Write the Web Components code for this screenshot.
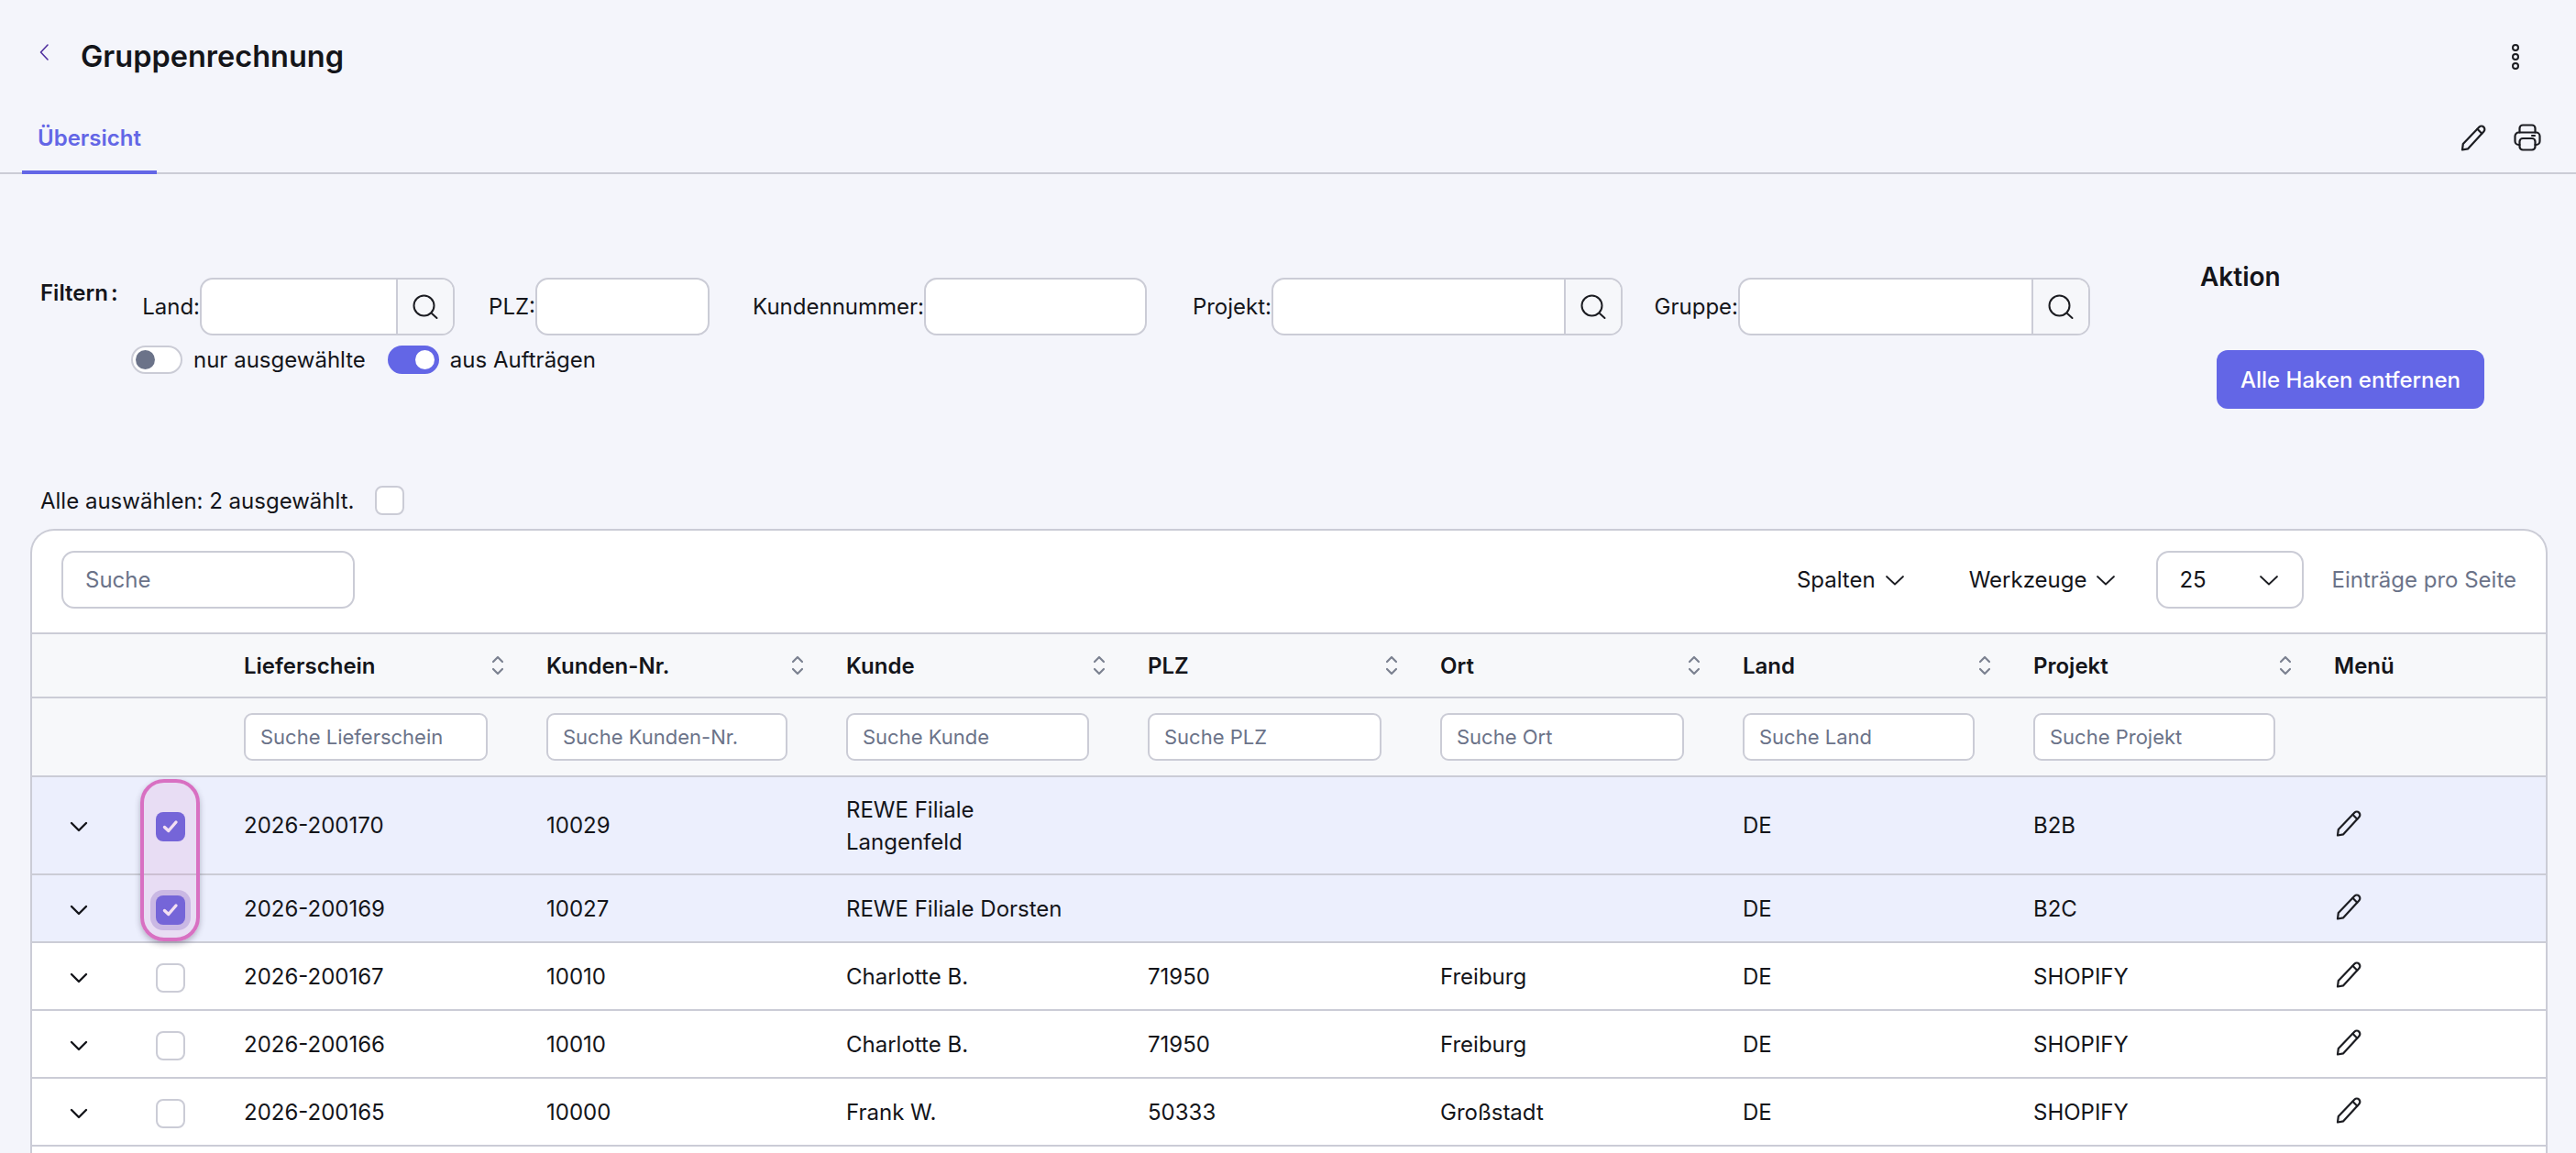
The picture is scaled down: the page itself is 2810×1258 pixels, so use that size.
<!DOCTYPE html>
<html lang="de">
<head>
<meta charset="utf-8">
<title>Gruppenrechnung</title>
<style>
  html, body {
    margin: 0;
    height: 1258px;
    overflow: hidden;
    background: #f4f5fb;
    color: #14151a;
    font-family: Inter, "Noto Sans", sans-serif;
    font-size: 24px;
  }
  body { display: flex; flex-direction: column; }
</style>
</head>
<body>
  <page-header heading="Gruppenrechnung"></page-header>
  <tab-bar tab="Übersicht">
    <app-icon slot="actions" name="pencil"></app-icon>
    <app-icon slot="actions" name="printer"></app-icon>
  </tab-bar>
  <filter-panel>
    <filter-field slot="fields" label="Land:" search style="width:341px;margin-right:37px" input-width="278"></filter-field>
    <filter-field slot="fields" label="PLZ:" style="width:241px;margin-right:50px" input-width="190"></filter-field>
    <filter-field slot="fields" label="Kundennummer:" style="width:427px;margin-right:49px" input-width="243"></filter-field>
    <filter-field slot="fields" label="Projekt:" search style="width:470px;margin-right:36px" input-width="383"></filter-field>
    <filter-field slot="fields" label="Gruppe:" search style="width:474px" input-width="384"></filter-field>
    <toggle-switch slot="toggles">nur ausgewählte</toggle-switch>
    <toggle-switch slot="toggles" on>aus Aufträgen</toggle-switch>
    <span slot="action-title">Aktion</span>
    <span slot="action-button">Alle Haken entfernen</span>
  </filter-panel>
  <select-all>Alle auswählen: 2 ausgewählt.</select-all>
  <data-table></data-table>

<script>
const ICONS = {
  back: '<svg width="12" height="20" viewBox="0 0 12 20" fill="none" stroke="#4f2f9f" stroke-width="1.6" stroke-linecap="round" stroke-linejoin="round"><path d="M10 2 2.500 10 10 18"/></svg>',
  dots: '<svg width="12" height="30" viewBox="0 0 12 30" fill="none" stroke="#1c1d22" stroke-width="2"><circle cx="6" cy="5" r="3"/><circle cx="6" cy="15" r="3"/><circle cx="6" cy="25" r="3"/></svg>',
  pencil: '<svg width="30" height="30" viewBox="0 0 30 30" fill="none" stroke="#1c1d22" stroke-width="2.200" stroke-linejoin="round" stroke-linecap="round"><path d="M2 28.500 2.800 22 20.500 3.600a3.400 3.400 0 0 1 4.800 0 3.400 3.400 0 0 1 .1 4.800L8.200 27.300Z"/><path d="M18.400 5.800 23.300 10.700"/></svg>',
  printer: '<svg width="30" height="30" viewBox="0 0 30 30" fill="none" stroke="#1c1d22" stroke-width="2.200" stroke-linecap="round" stroke-linejoin="round"><path d="M6.500 9.500V5a3.500 3.500 0 0 1 3.500-3.500h10A3.500 3.500 0 0 1 23.500 5v4.500"/><path d="M6.500 23H5.500a4 4 0 0 1-4-4v-5.500a4 4 0 0 1 4-4h19a4 4 0 0 1 4 4V19a4 4 0 0 1-4 4h-1"/><rect x="6.500" y="16" width="17" height="12.500" rx="3.500"/><path d="M20 13h3"/></svg>',
  search: '<svg width="30" height="30" viewBox="0 0 30 30" fill="none" stroke="#1c1d22" stroke-width="2" stroke-linecap="round"><circle cx="13.500" cy="13.500" r="11"/><path d="M22 22 27.500 27"/></svg>',
  sort: '<svg width="14" height="24" viewBox="0 0 14 24" fill="none" stroke="#7b8190" stroke-width="2.200" stroke-linecap="round" stroke-linejoin="round"><path d="M2 8 7 3 12 8"/><path d="M2 16 7 21 12 16"/></svg>',
  chevron: '<svg width="22" height="12" viewBox="0 0 22 12" fill="none" stroke="#1c1d22" stroke-width="1.800" stroke-linecap="round" stroke-linejoin="round"><path d="M2 2 11 10.500 20 2"/></svg>',
  rowchevron: '<svg width="22" height="14" viewBox="0 0 22 14" fill="none" stroke="#14151a" stroke-width="2.400" stroke-linecap="round" stroke-linejoin="round"><path d="M3 3 11 11 19 3"/></svg>',
  check: '<svg width="18" height="16" viewBox="0 0 18 16" fill="none" stroke="#f8f2fb" stroke-width="3.400" stroke-linecap="round" stroke-linejoin="round"><path d="M2.500 8.500 6.800 12.500 15 3"/></svg>'
};

class AppIcon extends HTMLElement {
  connectedCallback() {
    if (this.shadowRoot) return;
    this.attachShadow({ mode: 'open' });
    this.shadowRoot.innerHTML = `<style>:host{display:inline-flex;align-items:center;justify-content:center;line-height:0}</style>${ICONS[this.getAttribute('name')] || ''}`;
  }
}

class PageHeader extends HTMLElement {
  connectedCallback() {
    this.attachShadow({ mode: 'open' });
    this.shadowRoot.innerHTML = `
      <style>
        :host { display: flex; align-items: center; flex: none; height: 112px; padding: 12px 60px 0 42px; box-sizing: border-box; }
        .back { width: 46px; margin-top: -8px; }
        h1 { flex: 1; margin: 0; font-size: 32.500px; font-weight: 600; line-height: 44px; }
      </style>
      <div class="back"><app-icon name="back"></app-icon></div>
      <h1>${this.getAttribute('heading')}</h1>
      <app-icon name="dots"></app-icon>`;
  }
}

class TabBar extends HTMLElement {
  connectedCallback() {
    this.attachShadow({ mode: 'open' });
    this.shadowRoot.innerHTML = `
      <style>
        :host { display: flex; flex: none; align-items: flex-end; height: 76px; border-bottom: 2px solid #cbccd6; padding: 0 38px 0 24px; }
        .tab { height: 78px; box-sizing: border-box; padding: 2px 17px 0; display: flex; align-items: center; margin-bottom: -2px; border-bottom: 4px solid #6366e6; color: #6366e6; font-weight: 600; }
        .actions { margin-left: auto; display: flex; gap: 28px; align-self: center; }
      </style>
      <div class="tab">${this.getAttribute('tab')}</div>
      <div class="actions"><slot name="actions"></slot></div>`;
  }
}

class FilterField extends HTMLElement {
  connectedCallback() {
    this.attachShadow({ mode: 'open' });
    const search = this.hasAttribute('search');
    this.shadowRoot.innerHTML = `
      <style>
        :host { display: flex; align-items: center; justify-content: flex-end; flex: none; height: 63px; }
        label { white-space: nowrap; }
        .box { display: flex; height: 63px; width: ${this.getAttribute('input-width')}px; box-sizing: border-box; border: 2px solid #cbccd6; border-radius: 14px; overflow: hidden; background: #fff; flex: none; }
        input { flex: 1; min-width: 0; border: 0; outline: 0; background: transparent; font: inherit; padding: 0 24px; }
        .btn { width: 60px; flex: none; background: #f6f7fa; border-left: 2px solid #cbccd6; display: flex; align-items: center; justify-content: center; }
      </style>
      <label>${this.getAttribute('label')}</label>
      <div class="box"><input type="text">${search ? '<div class="btn"><app-icon name="search"></app-icon></div>' : ''}</div>`;
  }
}

class ToggleSwitch extends HTMLElement {
  connectedCallback() {
    this.attachShadow({ mode: 'open' });
    const on = this.hasAttribute('on');
    this.shadowRoot.innerHTML = `
      <style>
        :host { display: inline-flex; align-items: center; gap: 12px; height: 31px; }
        .track { width: 56px; height: 31px; box-sizing: border-box; border-radius: 16px; display: flex; align-items: center; padding: 0 3px; justify-content: ${on ? 'flex-end' : 'flex-start'}; background: ${on ? '#6366e6' : '#fff'}; border: 2px solid ${on ? '#6366e6' : '#cbccd6'}; }
        .knob { width: 21px; height: 21px; border-radius: 50%; background: ${on ? '#fff' : '#6b7389'}; }
      </style>
      <span class="track"><span class="knob"></span></span>
      <span><slot></slot></span>`;
  }
}

class FilterPanel extends HTMLElement {
  connectedCallback() {
    this.attachShadow({ mode: 'open' });
    this.shadowRoot.innerHTML = `
      <style>
        :host { display: flex; flex: none; height: 340px; box-sizing: border-box; padding: 0 100px 0 44px; }
        .heading { width: 99px; flex: none; padding-top: 113px; font-weight: 600; line-height: 34px; white-space: nowrap; word-spacing: -3px; }
        .main { flex: 1; padding-top: 113px; }
        .fields { display: flex; margin-left: 12px; }
        .toggles { display: flex; gap: 24px; margin-top: 11px; }
        .action { width: 292px; flex: none; padding-top: 95px; }
        .title { margin-left: -18px; font-size: 28px; font-weight: 600; line-height: 34px; }
        .button { margin-top: 63px; height: 64px; border-radius: 12px; background: #6366e6; color: #fff; font-weight: 500; display: flex; align-items: center; justify-content: center; white-space: nowrap; }
      </style>
      <div class="heading">Filtern :</div>
      <div class="main">
        <div class="fields"><slot name="fields"></slot></div>
        <div class="toggles"><slot name="toggles"></slot></div>
      </div>
      <div class="action">
        <div class="title"><slot name="action-title"></slot></div>
        <div class="button"><slot name="action-button"></slot></div>
      </div>`;
  }
}

class CheckBox extends HTMLElement {
  connectedCallback() {
    this.attachShadow({ mode: 'open' });
    const checked = this.hasAttribute('checked');
    const focused = this.hasAttribute('focused');
    this.shadowRoot.innerHTML = `
      <style>
        :host { display: inline-flex; line-height: 0; }
        .box { width: 32px; height: 32px; box-sizing: border-box; border-radius: 8px; display: flex; align-items: center; justify-content: center;
          background: ${checked ? '#6663dc' : '#fff'}; border: ${checked ? '0' : '2px solid #cbccd6'};
          ${focused ? 'box-shadow: 0 0 0 6px #c9c4ea;' : ''} }
      </style>
      <span class="box">${checked ? ICONS.check : ''}</span>`;
  }
}

class SelectAll extends HTMLElement {
  connectedCallback() {
    this.attachShadow({ mode: 'open' });
    this.shadowRoot.innerHTML = `
      <style>
        :host { display: flex; flex: none; align-items: center; gap: 23px; height: 32px; padding-left: 44px; margin-bottom: 15px; }
      </style>
      <span><slot></slot></span>
      <check-box></check-box>`;
  }
}

const COLUMNS = [
  { label: 'Lieferschein', key: 'id', width: 330 },
  { label: 'Kunden-Nr.', key: 'nr', width: 327 },
  { label: 'Kunde', key: 'name', width: 329 },
  { label: 'PLZ', key: 'plz', width: 319 },
  { label: 'Ort', key: 'ort', width: 330 },
  { label: 'Land', key: 'land', width: 317 },
  { label: 'Projekt', key: 'projekt', width: 328 }
];

const ROWS = [
  { id: '2026-200170', nr: '10029', name: 'REWE Filiale<br>Langenfeld', plz: '', ort: '', land: 'DE', projekt: 'B2B', checked: true, height: 107 },
  { id: '2026-200169', nr: '10027', name: 'REWE Filiale Dorsten', plz: '', ort: '', land: 'DE', projekt: 'B2C', checked: true, focused: true },
  { id: '2026-200167', nr: '10010', name: 'Charlotte B.', plz: '71950', ort: 'Freiburg', land: 'DE', projekt: 'SHOPIFY' },
  { id: '2026-200166', nr: '10010', name: 'Charlotte B.', plz: '71950', ort: 'Freiburg', land: 'DE', projekt: 'SHOPIFY' },
  { id: '2026-200165', nr: '10000', name: 'Frank W.', plz: '50333', ort: 'Großstadt', land: 'DE', projekt: 'SHOPIFY' }
];

class DataTable extends HTMLElement {
  connectedCallback() {
    this.attachShadow({ mode: 'open' });
    const cols = COLUMNS.map(c => `<col style="width:${c.width}px">`).join('');
    const head = COLUMNS.map(c => `<th><div class="sort"><span>${c.label}</span><app-icon name="sort"></app-icon></div></th>`).join('');
    const filters = COLUMNS.map(c => `<td><input class="cell-input" placeholder="Suche ${c.label}"></td>`).join('');
    const rows = ROWS.map(r => `
      <tr class="${r.checked ? 'selected' : ''}" style="height:${r.height || 74}px">
        <td class="ctr"><app-icon name="rowchevron"></app-icon></td>
        <td class="ctr"><check-box ${r.checked ? 'checked' : ''} ${r.focused ? 'focused' : ''}></check-box></td>
        ${COLUMNS.map(c => `<td>${r[c.key]}</td>`).join('')}
        <td><app-icon class="edit" name="pencil"></app-icon></td>
      </tr>`).join('');
    this.shadowRoot.innerHTML = `
      <style>
        :host { display: block; flex: 1; min-height: 0; margin: 0 31px 0 33px; box-sizing: border-box; background: #fff; border: 2px solid #cbccd6; border-bottom: 0; border-radius: 26px 26px 0 0; overflow: hidden; }
        .toolbar { display: flex; align-items: center; height: 111px; box-sizing: border-box; height: 113px; padding: 0 32px 4px; border-bottom: 2px solid #cbccd6; }
        .search { width: 320px; height: 63px; box-sizing: border-box; border: 2px solid #cbccd6; border-radius: 14px; padding: 0 24px; font: inherit; outline: 0; margin-right: auto; }
        input::placeholder { color: #6b7389; opacity: 1; }
        .menu { display: flex; align-items: center; gap: 10px; margin-right: 70px; white-space: nowrap; }
        .menu.last { margin-right: 44px; }
        .select { width: 161px; height: 63px; box-sizing: border-box; border: 2px solid #cbccd6; border-radius: 14px; padding: 0 25px 0 23px; display: flex; align-items: center; justify-content: space-between; margin-right: 30px; }
        .hint { color: #6b7389; white-space: nowrap; }
        .wrap { position: relative; }
        table { width: 2742px; table-layout: fixed; border-collapse: separate; border-spacing: 0; }
        th { text-align: left; font-weight: 600; background: #f7f8fa; height: 68px; padding: 0; border-bottom: 2px solid #cbccd6; box-sizing: content-box; }
        th .sort { display: flex; align-items: center; justify-content: space-between; padding: 0 14px 0 32px; }
        th.menu-head { padding-left: 32px; }
        .filters td { background: #f7f8fa; height: 84px; box-sizing: content-box; }
        td { padding: 0 32px; border-bottom: 2px solid #cbccd6; line-height: 35px; box-sizing: border-box; }
        td.ctr { padding: 0; text-align: center; }
        td.ctr > * { vertical-align: middle; }
        .edit { padding: 4px 0 0 2px; }
        .cell-input { width: 100%; height: 52px; box-sizing: border-box; border: 2px solid #cbccd6; border-radius: 9px; padding: 0 16px; font: inherit; font-size: 22px; outline: 0; background: #fff; display: block; }
        tr.selected td { background: #eceffd; }
        .mark { position: absolute; left: 118px; top: 158px; width: 65px; height: 177px; box-sizing: border-box; border: 4px solid #d870c2; border-radius: 26px; background: rgba(216,112,194,.14); box-shadow: 0 3px 6px rgba(40,30,60,.3); }
      </style>
      <div class="toolbar">
        <input class="search" placeholder="Suche">
        <div class="menu"><span>Spalten</span><app-icon name="chevron"></app-icon></div>
        <div class="menu last"><span>Werkzeuge</span><app-icon name="chevron"></app-icon></div>
        <div class="select"><span>25</span><app-icon name="chevron"></app-icon></div>
        <span class="hint">Einträge pro Seite</span>
      </div>
      <div class="wrap">
        <table>
          <colgroup><col style="width:102px"><col style="width:97px">${cols}<col></colgroup>
          <thead>
            <tr><th></th><th></th>${head}<th class="menu-head">Menü</th></tr>
            <tr class="filters"><td></td><td></td>${filters}<td></td></tr>
          </thead>
          <tbody>${rows}</tbody>
        </table>
        <div class="mark"></div>
      </div>`;
  }
}

customElements.define('app-icon', AppIcon);
customElements.define('page-header', PageHeader);
customElements.define('tab-bar', TabBar);
customElements.define('filter-field', FilterField);
customElements.define('toggle-switch', ToggleSwitch);
customElements.define('filter-panel', FilterPanel);
customElements.define('check-box', CheckBox);
customElements.define('select-all', SelectAll);
customElements.define('data-table', DataTable);
</script>
</body>
</html>
